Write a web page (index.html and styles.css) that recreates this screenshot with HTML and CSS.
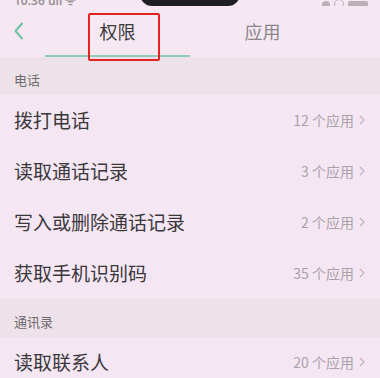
FILE: index.html
```html
<!DOCTYPE html>
<html lang="zh">
<head>
<meta charset="utf-8">
<link rel="stylesheet" href="styles.css">
</head>
<body>
<div class="screen">
  <div class="status">
    <span class="time">10:36 ull ᯤ</span>
    <div class="notch"></div>
    <span class="icons"><i class="dot"></i><i class="ring"></i><i class="batt"></i></span>
  </div>
  <div class="topbar">
    <div class="back">
      <svg width="11" height="18" viewBox="0 0 11 18"><path d="M9 1.5 L2.5 9 L9 16.5" fill="none" stroke="#6cc3a1" stroke-width="2" stroke-linecap="round" stroke-linejoin="round"/></svg>
    </div>
    <div class="tabs">
      <div class="tab active">权限</div>
      <div class="tab">应用</div>
    </div>
    <div class="mark"></div>
  </div>

  <div class="section">电话</div>
  <div class="row"><span class="name">拨打电话</span><span class="count">12 个应用<svg width="6" height="10" viewBox="0 0 6 10"><path d="M1 1 L5 5 L1 9" fill="none" stroke="#bdb5bc" stroke-width="1.2"/></svg></span></div>
  <div class="row"><span class="name">读取通话记录</span><span class="count">3 个应用<svg width="6" height="10" viewBox="0 0 6 10"><path d="M1 1 L5 5 L1 9" fill="none" stroke="#bdb5bc" stroke-width="1.2"/></svg></span></div>
  <div class="row"><span class="name">写入或删除通话记录</span><span class="count">2 个应用<svg width="6" height="10" viewBox="0 0 6 10"><path d="M1 1 L5 5 L1 9" fill="none" stroke="#bdb5bc" stroke-width="1.2"/></svg></span></div>
  <div class="row"><span class="name">获取手机识别码</span><span class="count">35 个应用<svg width="6" height="10" viewBox="0 0 6 10"><path d="M1 1 L5 5 L1 9" fill="none" stroke="#bdb5bc" stroke-width="1.2"/></svg></span></div>
  <div class="section">通讯录</div>
  <div class="row"><span class="name">读取联系人</span><span class="count">20 个应用<svg width="6" height="10" viewBox="0 0 6 10"><path d="M1 1 L5 5 L1 9" fill="none" stroke="#bdb5bc" stroke-width="1.2"/></svg></span></div>
</div>
</body>
</html>
```

FILE: styles.css
```css
html, body {
  margin: 0;
  padding: 0;
  background: #f4e6f2;
}
body {
  font-family: "Noto Sans CJK SC", "Noto Sans", sans-serif;
  width: 380px;
  height: 378px;
  overflow: hidden;
}
.screen {
  width: 380px;
  background: #f5e8f3;
}
.status {
  height: 6px;
  overflow: hidden;
  display: flex;
  justify-content: space-between;
  align-items: flex-end;
  padding: 0 12px 0 14px;
  position: relative;
}
.time {
  font-family: "Noto Sans", sans-serif;
  font-size: 12px;
  line-height: 12px;
  color: #9a9398;
  margin-bottom: -1px;
  font-weight: 600;
}
.notch {
  position: absolute;
  left: 140px;
  top: -6px;
  width: 100px;
  height: 12px;
  background: #1f1f22;
  border-radius: 0 0 12px 12px;
}
.icons {
  display: flex;
  gap: 4px;
  align-items: flex-end;
  margin-bottom: -3px;
}
.icons i { display: block; background: #b9b1b7; }
.dot { width: 8px; height: 8px; border-radius: 50%; }
.ring { width: 8px; height: 8px; border-radius: 50%; background: transparent !important; border: 1.5px solid #b9b1b7; }
.batt { width: 20px; height: 8px; border-radius: 2px; }

.topbar {
  height: 51px;
  display: flex;
  align-items: stretch;
  position: relative;
}
.back {
  width: 45px;
  display: flex;
  align-items: center;
  padding-left: 13px;
  box-sizing: border-box;
  padding-bottom: 1px;
}
.tabs {
  display: flex;
  width: 290px;
}
.tab {
  flex: 1;
  display: flex;
  align-items: center;
  justify-content: center;
  font-size: 18px;
  color: #8b868a;
  box-sizing: border-box;
  padding-bottom: 2px;
}
.tab.active {
  color: #3c3a3c;
  border-bottom: 2px solid #8fcab4;
  padding-bottom: 0;
}
.mark {
  position: absolute;
  left: 88px;
  top: 7px;
  width: 68px;
  height: 44px;
  border: 2.5px solid #e2231f;
  border-radius: 2px;
}

.section {
  height: 38px;
  box-sizing: border-box;
  padding: 14px 14px 0;
  font-size: 13px;
  line-height: 17px;
  color: #6e696d;
  background: #ede2ea;
}
.row {
  height: 51px;
  display: flex;
  align-items: center;
  justify-content: space-between;
  padding: 0 15px 2px 14px;
  box-sizing: border-box;
  background: #f5e6f3;
}
.name {
  font-size: 19px;
  color: #3a383a;
}
.count {
  display: flex;
  align-items: center;
  gap: 5px;
  font-size: 14px;
  color: #aaa2a9;
}
```
